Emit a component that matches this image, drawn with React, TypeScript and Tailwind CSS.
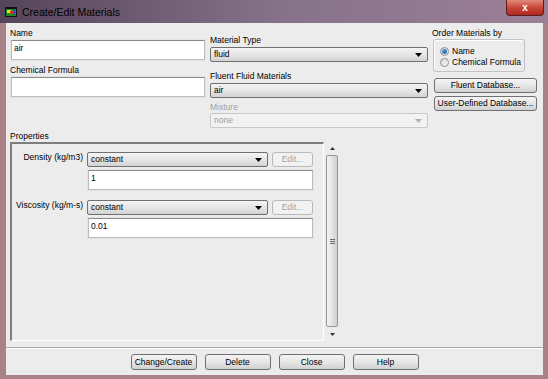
import React from 'react';
import clsx from 'clsx';

const Arrow = ({ disabled }: { disabled?: boolean }) => (
  <svg width="7" height="4" viewBox="0 0 7 4">
    <path d="M0 0h7L3.5 4z" fill={disabled ? '#b0b0b0' : '#000'} />
  </svg>
);

const Combo = ({ value, disabled, className }: { value: string; disabled?: boolean; className?: string }) => (
  <div
    className={clsx(
      'flex h-[15px] items-center justify-between rounded-[2px] border pl-[3px] pr-[5px]',
      disabled
        ? 'border-[#c8c8c8] bg-[#f2f2f2] text-[#9c9c9c]'
        : 'border-[#707070] bg-linear-to-b from-[#f4f4f4] via-[#e6e6e6] to-[#d3d3d3]',
      className
    )}
  >
    <span>{value}</span>
    <Arrow disabled={disabled} />
  </div>
);

const TextBox = ({ value, className }: { value?: string; className?: string }) => (
  <div
    className={clsx(
      'h-[20px] border border-[#bcbcbc] border-t-[#8a8a8a] bg-white px-[2px] pt-[2px] shadow-[0_0_0_1px_#e4e4e4]',
      className
    )}
  >
    {value}
  </div>
);

const Btn = ({ children, disabled, className }: { children: React.ReactNode; disabled?: boolean; className?: string }) => (
  <div
    className={clsx(
      'flex items-center justify-center rounded-[3px] border',
      disabled
        ? 'border-[#b9b9b9] bg-[#f2f2f2] text-[#a2a2a2]'
        : 'border-[#707070] bg-linear-to-b from-[#f4f4f4] via-[#e6e6e6] to-[#d1d1d1]',
      className
    )}
  >
    {children}
  </div>
);

const Radio = ({ label, checked }: { label: string; checked?: boolean }) => (
  <div className="flex h-[11px] items-center gap-[3px]">
    <div className="flex h-[9px] w-[9px] items-center justify-center rounded-full border border-[#8e8f8f] bg-linear-to-br from-[#d6d6d6] to-[#f8f8f8]">
      {checked && <div className="h-[5px] w-[5px] rounded-full bg-linear-to-br from-[#5aa6e6] to-[#1c5aa6]" />}
    </div>
    <span>{label}</span>
  </div>
);

const PropRow = ({ label, value, className }: { label: string; value: string; className?: string }) => (
  <div className={clsx('flex', className)}>
    <div className="w-[71px] text-right">{label}</div>
    <div className="ml-[4px] flex flex-col">
      <div className="flex gap-[4px]">
        <Combo value="constant" className="w-[181px]" />
        <Btn disabled className="h-[15px] w-[41px]">Edit...</Btn>
      </div>
      <TextBox value={value} className="ml-[1px] mt-[3px] w-[225px]" />
    </div>
  </div>
);

export default function App() {
  return (
    <div className="flex h-[379px] w-[548px] flex-col bg-[#a88286] font-['Liberation_Sans',Arial,sans-serif] text-[8.5px] leading-[11px] text-black">
      {/* title bar */}
      <div className="flex h-[23px] items-start bg-linear-to-r from-[#55445a] via-[#85728a] to-[#9c8096]">
        <div className="flex h-[23px] flex-1 items-center pl-[5px]">
          <svg width="12" height="10" viewBox="0 0 12 10">
            <rect x="0" y="0" width="12" height="10" fill="#111" />
            <rect x="1" y="2" width="10" height="7" fill="#1a8a2a" />
            <rect x="2" y="3" width="4" height="3" fill="#e8e020" />
            <rect x="5" y="4" width="3" height="3" fill="#e03020" />
            <rect x="8" y="3" width="2" height="4" fill="#2050d0" />
          </svg>
          <span className="ml-[5px] text-[10.5px] leading-[12px]">Create/Edit Materials</span>
        </div>
        <div className="mr-[4px] flex h-[16px] w-[38px] items-center justify-center rounded-b-[4px] border border-t-0 border-[#5a1e1e] bg-linear-to-b from-[#e2897a] via-[#c8463a] to-[#b0281e] text-[10px] font-bold leading-[10px] text-white">
          x
        </div>
      </div>

      {/* client area */}
      <div className="ml-[6px] mr-[5px] flex h-[352px] flex-col bg-[#ececec]">
        <div className="flex items-start pl-[4px] pt-[5px]">
          <div className="flex w-[196px] flex-col">
            <div>Name</div>
            <TextBox value="air" className="ml-[1px] mt-[1px] w-[194px]" />
            <div className="mt-[5px]">Chemical Formula</div>
            <TextBox className="ml-[1px] mt-[1px] w-[194px]" />
          </div>
          <div className="ml-[4px] flex w-[218px] flex-col pt-[7px]">
            <div>Material Type</div>
            <Combo value="fluid" className="mt-[1px]" />
            <div className="mt-[9px]">Fluent Fluid Materials</div>
            <Combo value="air" className="mt-[1px]" />
            <div className="mt-[4px] text-[#a0a0a0]">Mixture</div>
            <Combo value="none" disabled />
          </div>
          <div className="ml-[4px] flex w-[106px] flex-col">
            <div>Order Materials by</div>
            <div className="ml-[1px] flex h-[33px] w-[92px] flex-col rounded-[3px] border border-[#c2c2c2] pl-[6px] pt-[6px] shadow-[inset_1px_1px_0_#fff]">
              <Radio label="Name" checked />
              <Radio label="Chemical Formula" />
            </div>
            <Btn className="ml-[2px] mt-[6px] h-[15px] w-[103px]">Fluent Database...</Btn>
            <Btn className="ml-[2px] mt-[3px] h-[15px] w-[103px]">User-Defined Database...</Btn>
          </div>
        </div>

        <div className="mt-[3px] pl-[4px]">Properties</div>

        <div className="flex h-[199px] gap-[2px] pl-[4px]">
          <div className="flex w-[314px] flex-col border-b border-l-2 border-r border-t-2 border-b-white border-l-[#7e7e7e] border-r-white border-t-[#7e7e7e] pt-[8px]">
            <PropRow label="Density (kg/m3)" value="1" />
            <PropRow label="Viscosity (kg/m-s)" value="0.01" className="mt-[10px]" />
          </div>
          <div className="flex w-[12px] flex-col">
            <div className="flex h-[13px] items-center justify-center">
              <svg width="5" height="3" viewBox="0 0 5 3"><path d="M0 3h5L2.5 0z" fill="#333" /></svg>
            </div>
            <div className="flex flex-1 items-center justify-center rounded-[2px] border border-[#979797] bg-linear-to-r from-[#f3f3f3] via-[#e4e4e4] to-[#cfcfcf]">
              <div className="flex flex-col gap-[1px]">
                <div className="h-px w-[5px] bg-[#6a6a6a]" />
                <div className="h-px w-[5px] bg-[#6a6a6a]" />
                <div className="h-px w-[5px] bg-[#6a6a6a]" />
              </div>
            </div>
            <div className="flex h-[14px] items-center justify-center">
              <svg width="5" height="3" viewBox="0 0 5 3"><path d="M0 0h5L2.5 3z" fill="#333" /></svg>
            </div>
          </div>
        </div>

        <div className="mt-[6px] h-[2px] border-b border-t border-b-white border-t-[#a8a8a8]" />

        <div className="mt-[5px] flex justify-center gap-[8px]">
          <Btn className="h-[16px] w-[66px]">Change/Create</Btn>
          <Btn className="h-[16px] w-[66px]">Delete</Btn>
          <Btn className="h-[16px] w-[66px]">Close</Btn>
          <Btn className="h-[16px] w-[66px]">Help</Btn>
        </div>
      </div>
    </div>
  );
}
